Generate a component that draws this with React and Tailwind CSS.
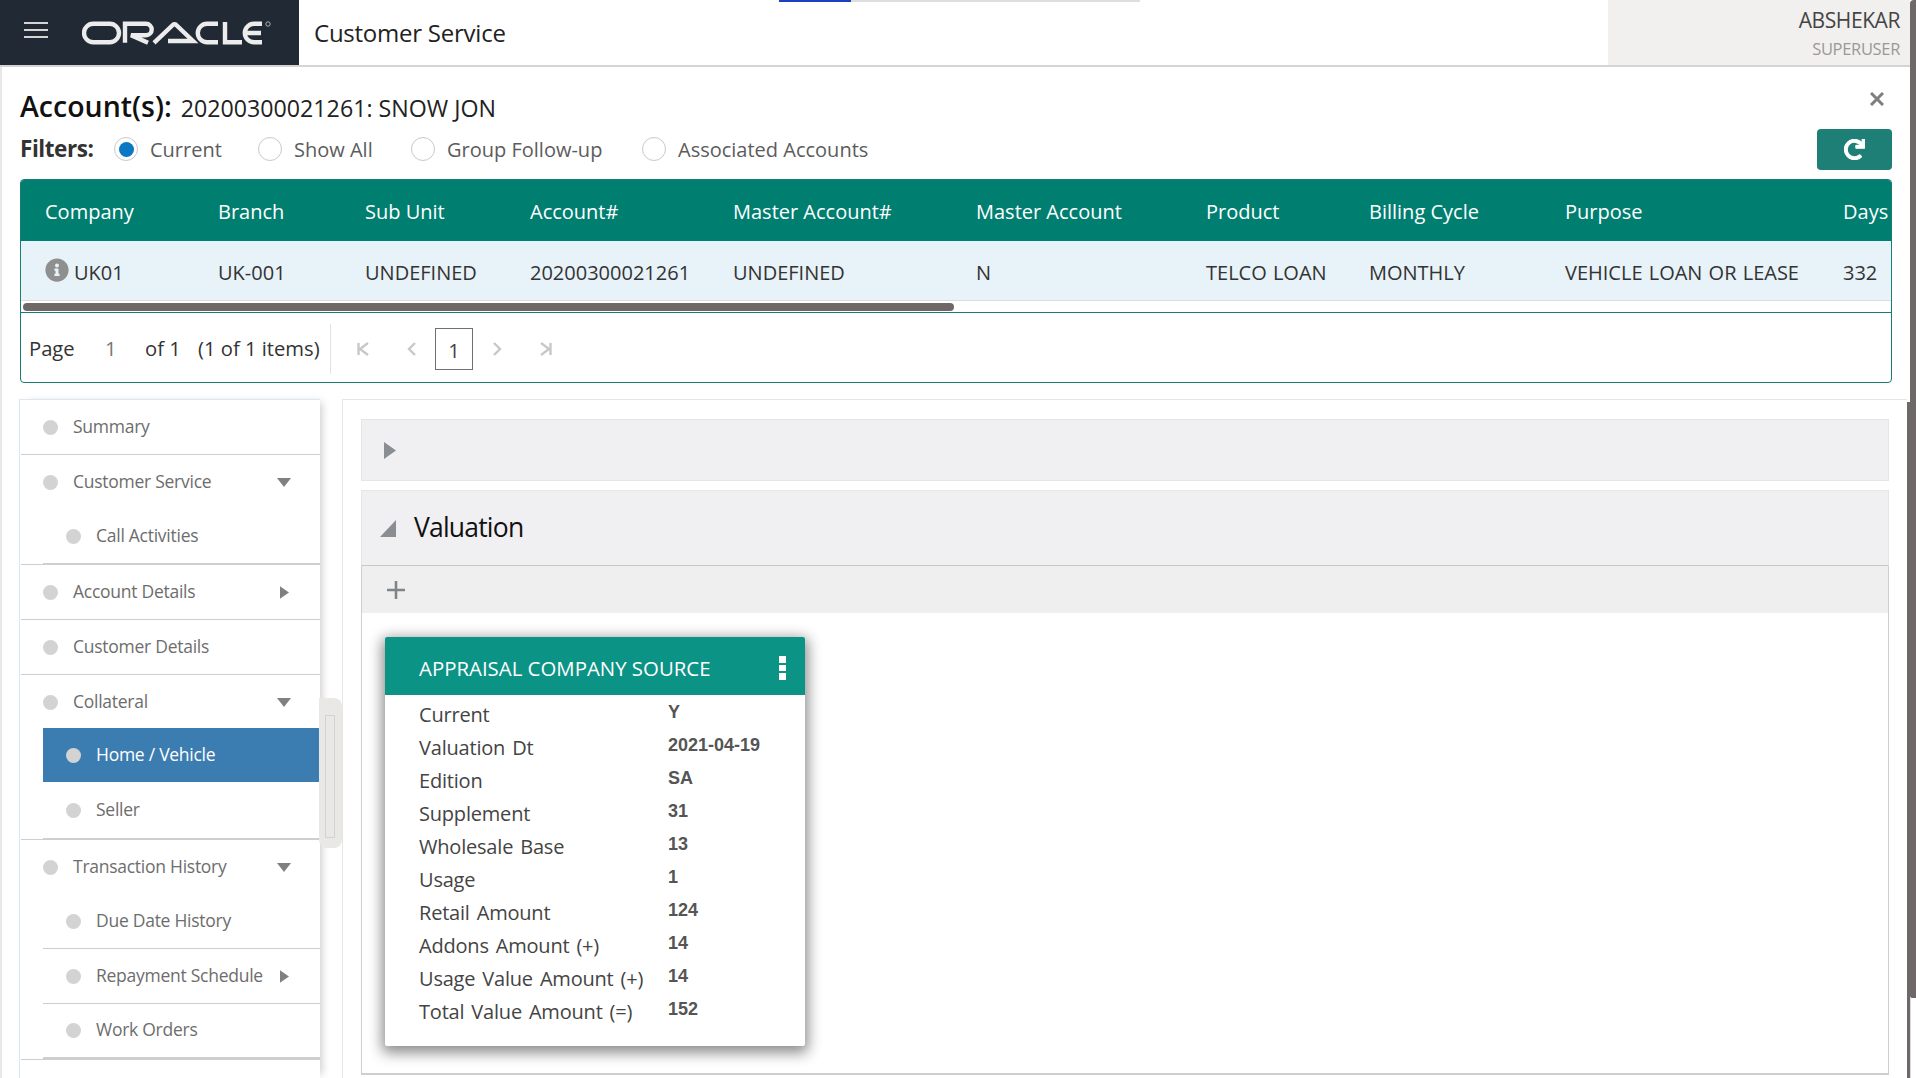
import { FaInfoCircle, FaRedo } from "react-icons/fa";

const sans = "font-['Open_Sans',sans-serif]";

const columns = [
  { head: "Company", cell: "UK01", w: "w-[173px]" },
  { head: "Branch", cell: "UK-001", w: "w-[147px]" },
  { head: "Sub Unit", cell: "UNDEFINED", w: "w-[165px]" },
  { head: "Account#", cell: "20200300021261", w: "w-[203px]" },
  { head: "Master Account#", cell: "UNDEFINED", w: "w-[243px]" },
  { head: "Master Account", cell: "N", w: "w-[230px]" },
  { head: "Product", cell: "TELCO LOAN", w: "w-[163px]" },
  { head: "Billing Cycle", cell: "MONTHLY", w: "w-[196px]" },
  { head: "Purpose", cell: "VEHICLE LOAN OR LEASE", w: "w-[278px]" },
  { head: "Days", cell: "332", w: "w-[60px]" },
];

const valuation = [
  ["Current", "Y"],
  ["Valuation Dt", "2021-04-19"],
  ["Edition", "SA"],
  ["Supplement", "31"],
  ["Wholesale Base", "13"],
  ["Usage", "1"],
  ["Retail Amount", "124"],
  ["Addons Amount (+)", "14"],
  ["Usage Value Amount (+)", "14"],
  ["Total Value Amount (=)", "152"],
];

const TriangleRight = ({ className }) => (
  <svg viewBox="0 0 10 14" className={className} fill="currentColor">
    <path d="M0 0 L10 7 L0 14 Z" />
  </svg>
);

const TriangleDown = () => (
  <svg viewBox="0 0 14 9" className="w-[14px] h-[9px] text-[#808080]" fill="currentColor">
    <path d="M0 0 H14 L7 9 Z" />
  </svg>
);

const OracleLogo = () => (
  <svg viewBox="0 0 192 24" className="w-[192px] h-[24px]" fill="none" stroke="#ececec" strokeWidth="4.4">
    <rect x="2" y="2.8" width="35" height="18.4" rx="9.2" />
    <path d="M43 21.8 V2.8 H64 a5.4 5.4 0 0 1 0 11.4 H49 L66 21.8" />
    <path d="M72 21.8 L91 3.8 a2 2 0 0 1 3 0 L111 20 H86" />
    <path d="M136 2.8 H125 a9.2 9.2 0 0 0 0 18.4 H136" />
    <path d="M143 1 V21.2 H160" />
    <path d="M180 2.8 H172 a9.2 9.2 0 0 0 0 18.4 H180 M165 12 H179" />
    <circle cx="186" cy="3" r="2.2" strokeWidth="1" stroke="#aaa" />
  </svg>
);

const Radio = ({ label, checked, className }) => (
  <div className={"flex items-center " + className}>
    <span className="w-[24px] h-[24px] rounded-full border border-[#c9c9c9] flex items-center justify-center bg-white shrink-0">
      {checked && <span className="w-[15px] h-[15px] rounded-full bg-[#0a78c2]" />}
    </span>
    <span className="ml-[12px] pt-[2px] text-[20px] text-[#5c5c5c]">{label}</span>
  </div>
);

const PagerIcon = ({ d, className }) => (
  <svg viewBox="0 0 14 18" className={"w-[14px] h-[18px] " + className} fill="none" stroke="#c8c8c8" strokeWidth="2.4">
    <path d={d} />
  </svg>
);

const NavRow = ({ label, sub, active, caret, h = "h-[54px]", line = "", inner = "" }) => (
  <div className={h + " flex " + (sub ? "pl-[22px] " : "") + line}>
    <div className={"flex-1 flex items-center pr-[29px] " + (sub ? "pl-[23px] " : "pl-[22px] ") + (active ? "bg-[#3b7db1] " : "") + inner}>
      <span className="w-[15px] h-[15px] rounded-full bg-[#d3d3d3] shrink-0" />
      <span className={"ml-[15px] -mt-[2px] flex-1 text-[17.5px] tracking-[-0.015em] whitespace-nowrap " + (active ? "text-white" : "text-[#6d6d6d]")}>
        {label}
      </span>
      {caret === "down" && <TriangleDown />}
      {caret === "right" && <TriangleRight className="w-[9px] h-[13px] mr-[2px] text-[#808080]" />}
    </div>
  </div>
);

const Sidebar = () => (
  <div className="relative w-[321px] pl-[17px] shrink-0">
    <div className="w-[301px] h-full border-l border-t border-[#dbe6ee] pl-[1px] shadow-[5px_0_8px_-3px_rgba(0,0,0,0.2)]">
      <NavRow label="Summary" h="h-[55px]" line="border-b border-[#cfcfcf]" />
      <NavRow label="Customer Service" caret="down" />
      <NavRow label="Call Activities" sub h="h-[56px]" line="border-b border-[#cfcfcf]" inner="border-b border-[#cfcfcf]" />
      <NavRow label="Account Details" caret="right" h="h-[55px]" line="border-b border-[#cfcfcf]" />
      <NavRow label="Customer Details" h="h-[55px]" line="border-b border-[#cfcfcf]" />
      <NavRow label="Collateral" caret="down" h="h-[53px]" inner="pt-[2px]" />
      <NavRow label="Home / Vehicle" sub active />
      <NavRow label="Seller" sub h="h-[58px]" line="border-b border-[#cfcfcf]" inner="border-b border-[#cfcfcf]" />
      <NavRow label="Transaction History" caret="down" />
      <NavRow label="Due Date History" sub h="h-[55px]" inner="border-b border-[#cfcfcf]" />
      <NavRow label="Repayment Schedule" sub caret="right" h="h-[55px]" inner="border-b border-[#cfcfcf]" />
      <NavRow label="Work Orders" sub h="h-[56px]" line="border-b border-[#cfcfcf]" inner="border-b-2 border-[#cfcfcf]" />
    </div>
    {/* inner scroll thumb */}
    <div className="absolute left-[317px] top-[299px] w-[23px] h-[150px] bg-[#e9e8e5] rounded-b-[8px] rounded-tr-[8px] pl-[6px] pt-[17px]">
      <div className="w-[10px] h-[123px] border border-[#d2d2d2]" />
    </div>
  </div>
);

const AppraisalCard = () => (
  <div className="w-[420px] h-[409px] bg-white rounded-[2px] shadow-[0_4px_14px_3px_rgba(0,0,0,0.45)]">
    <div className="h-[58px] bg-[#0b9386] flex items-center pl-[34px] pr-[19px] pt-[4px] justify-between rounded-t-[2px]">
      <span className="text-[20.4px] text-white">APPRAISAL COMPANY SOURCE</span>
      <span className="flex flex-col gap-[2px]">
        <span className="w-[7px] h-[6.5px] bg-white" />
        <span className="w-[7px] h-[6.5px] bg-white" />
        <span className="w-[7px] h-[6.5px] bg-white" />
      </span>
    </div>
    <div className="pt-[3px]">
      {valuation.map(([label, value]) => (
        <div key={label} className="h-[33px] flex items-center pl-[34px]">
          <span className="w-[249px] text-[20px] tracking-[-0.01em] [word-spacing:2px] text-[#444]">{label}</span>
          <span className="relative -top-[2px] font-['Liberation_Sans',sans-serif] font-bold text-[18px] text-[#555]">{value}</span>
        </div>
      ))}
    </div>
  </div>
);

const App = () => {
  return (
    <div className={"w-[1916px] h-[1078px] overflow-hidden flex bg-white text-black " + sans}>
      <div className="flex-1 min-w-0 flex flex-col">
        <header className="h-[67px] flex border-b-2 border-[#d4d4d4] shrink-0 relative">
          <div className="w-[299px] bg-[#212a34] flex items-center pl-[24px]">
            <div className="flex flex-col gap-[5px] mb-[5px]">
              <span className="w-[24px] h-[2px] bg-[#d5d5d5]" />
              <span className="w-[24px] h-[2px] bg-[#d5d5d5]" />
              <span className="w-[24px] h-[2px] bg-[#d5d5d5]" />
            </div>
            <div className="ml-[34px]">
              <OracleLogo />
            </div>
          </div>
          <div className="ml-[15px] flex-1 flex items-center text-[24px] tracking-[-0.01em] text-[#222]">Customer Service</div>
          <div className="w-[302px] bg-[#f1f0ee] flex flex-col items-end pr-[10px] pt-[5px]">
            <span className="text-[21px] leading-[30px] tracking-[-0.02em] text-[#444]">ABSHEKAR</span>
            <span className="text-[16.5px] leading-[28px] tracking-[-0.02em] text-[#999]">SUPERUSER</span>
          </div>
          {/* tab strip peeking under the top edge */}
          <div className="absolute left-[779px] top-0 flex h-[2px]">
            <span className="w-[72px] bg-[#1f3fc0]" />
            <span className="w-[289px] bg-[#dedede]" />
          </div>
        </header>

        <div className="flex-1 min-h-0 flex flex-col border-l-2 border-[#e8e8e8]">
          <div className="pl-[18px] pr-[18px] shrink-0">
            <div className="flex justify-between pt-[22px] h-[56px]">
              <div className="flex items-baseline">
                <span className="text-[28.5px] leading-[34px] font-semibold text-[#111]">Account(s):</span>
                <span className="ml-[9px] text-[23.2px] text-[#222]">20200300021261: SNOW JON</span>
              </div>
              <svg viewBox="0 0 14 14" className="w-[14px] h-[14px] mr-[8px] mt-[3px]" stroke="#7f7f7f" strokeWidth="3">
                <path d="M1 1 L13 13 M13 1 L1 13" />
              </svg>
            </div>
            <div className="flex items-center h-[42px] mt-[5px]">
              <span className="w-[94px] text-[22.5px] font-bold tracking-[-0.02em] text-[#333]">Filters:</span>
              <Radio label="Current" checked className="w-[144px]" />
              <Radio label="Show All" className="w-[153px]" />
              <Radio label="Group Follow-up" className="w-[231px]" />
              <Radio label="Associated Accounts" className="w-[300px]" />
              <button className="ml-auto w-[75px] h-[41px] bg-[#1d7f75] rounded-[4px] flex items-center justify-center text-white">
                <FaRedo className="text-[21px] [stroke-width:25]" />
              </button>
            </div>
            <div className="mt-[9px] h-[204px] border border-[#1a7c72] rounded-[4px] overflow-hidden">
              <div className="flex h-[61px] bg-[#007e70] text-white items-center pl-[24px] pt-[2px] text-[20px] whitespace-nowrap">
                {columns.map((c) => (
                  <span key={c.head} className={c.w + " shrink-0"}>{c.head}</span>
                ))}
              </div>
              <div className="flex h-[60px] bg-[#e7f2f9] border-b border-[#dcdcdc] items-center pl-[24px] pt-[4px] text-[20px] [word-spacing:1px] text-[#333] whitespace-nowrap">
                {columns.map((c, i) => (
                  <span key={c.head} className={c.w + " shrink-0 flex items-center"}>
                    {i === 0 && <FaInfoCircle className="relative -top-[3px] text-[24px] text-[#8f8f8f] mr-[5px]" />}
                    {c.cell}
                  </span>
                ))}
              </div>
              <div className="h-[12px] pl-[2px] pt-[2px] bg-white border-b border-[#1a7c72]">
                <div className="w-[931px] h-[8px] bg-[#6f6868] rounded-full" />
              </div>
              <div className="h-[69px] flex items-center pl-[8px] pt-[2px] text-[20.2px] text-[#333]">
                <span className="w-[76px]">Page</span>
                <span className="w-[40px] text-[#777]">1</span>
                <span className="w-[53px]">of 1</span>
                <span className="w-[132px] whitespace-nowrap">(1 of 1 items)</span>
                <span className="w-px h-[50px] bg-[#e2e2e2] mr-[25px]" />
                <PagerIcon d="M2.5 3 V15 M12 3 L4 9 L12 15" />
                <PagerIcon d="M10 3 L4 9 L10 15" className="ml-[35px]" />
                <span className="ml-[16px] w-[38px] h-[42px] pt-[3px] border border-[#707070] flex items-center justify-center text-[#444]">1</span>
                <PagerIcon d="M4 3 L10 9 L4 15" className="ml-[17px]" />
                <PagerIcon d="M2 3 L10 9 L2 15 M11.5 3 V15" className="ml-[35px]" />
              </div>
            </div>
          </div>

          <div className="mt-[16px] flex-1 min-h-0 flex">
            <Sidebar />
            <div className="flex-1 min-w-0 pl-[18px] pr-[18px] pt-[19px] border-l border-t border-[#e6e6e6] ml-[19px]">
              <div className="h-[62px] bg-[#f0f0f2] border border-[#e6e6e6] flex items-center pl-[22px]">
                <TriangleRight className="w-[12px] h-[19px] text-[#8a8d91]" />
              </div>
              <div className="mt-[9px] h-[76px] bg-[#f0f0f2] border border-[#e6e6e6] border-b-[#c8c8c8] flex items-center pl-[18px]">
                <svg viewBox="0 0 16 17" className="w-[16px] h-[17px] text-[#8a8d91]" fill="currentColor">
                  <path d="M16 0 V17 H0 Z" />
                </svg>
                <span className="ml-[18px] text-[26.5px] tracking-[-0.03em] text-[#111]">Valuation</span>
              </div>
              <div className="h-[509px] border-l border-r border-b-2 border-l-[#cfcfcf] border-r-[#cfcfcf] border-b-[#cfcfcf]">
                <div className="h-[47px] bg-[#efeff0] flex items-center pl-[25px]">
                  <svg viewBox="0 0 18 18" className="w-[18px] h-[18px]" stroke="#808488" strokeWidth="2.6">
                    <path d="M9 0 V18 M0 9 H18" />
                  </svg>
                </div>
                <div className="pl-[23px] pt-[24px]">
                  <AppraisalCard />
                </div>
              </div>
            </div>
            <div className="w-[3px] mt-[3px] bg-[#6f6868] shrink-0" />
          </div>
        </div>
      </div>
      <div className="w-[6px] shrink-0 flex flex-col">
        <div className="h-[998px] bg-[#6f6868] rounded-tl-[4px] rounded-bl-[2px]" />
        <div className="flex-1 border-l border-[#dcdcdc]" />
      </div>
    </div>
  );
};

export default App;
